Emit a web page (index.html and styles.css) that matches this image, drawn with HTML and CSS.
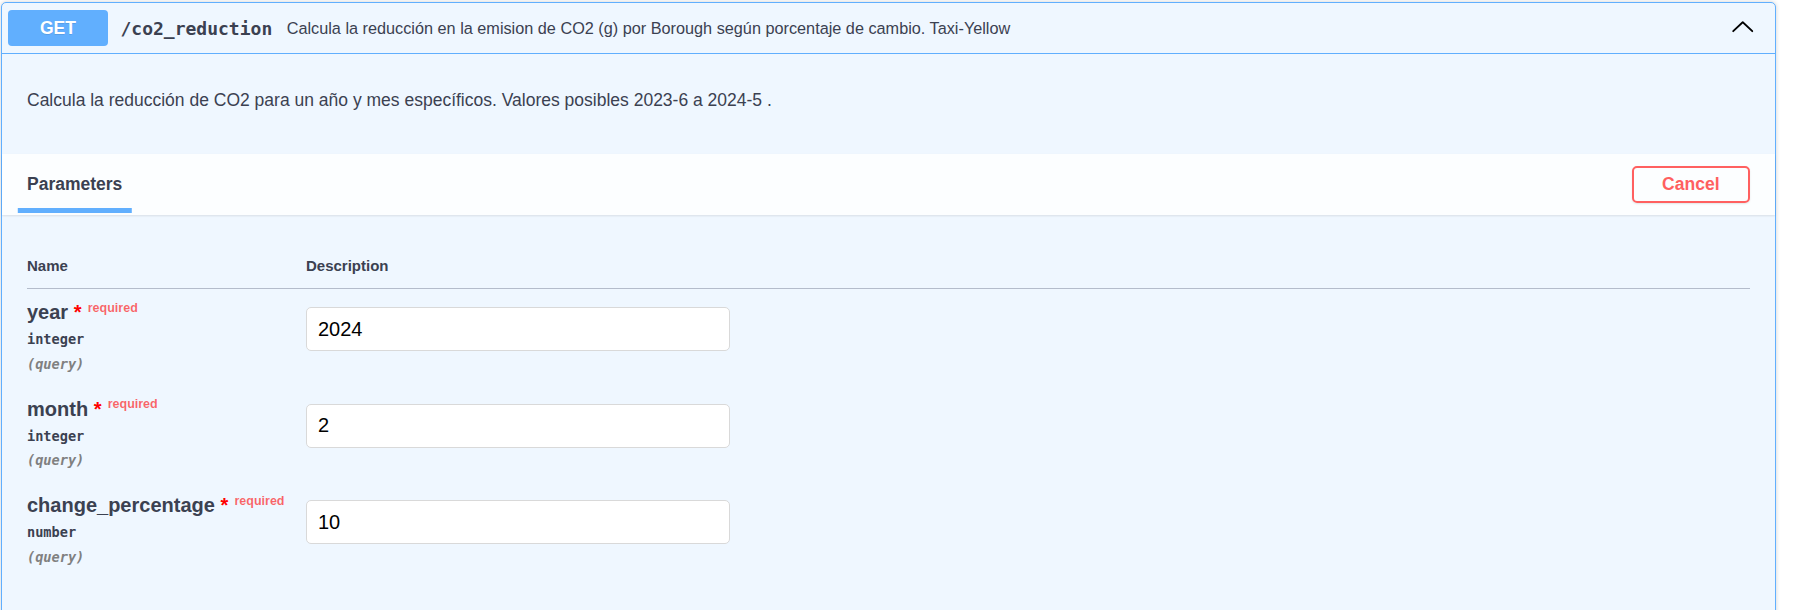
FILE: index.html
```html
<!DOCTYPE html>
<html lang="es">
<head>
<meta charset="utf-8">
<title>co2_reduction</title>
<link rel="stylesheet" href="styles.css">
</head>
<body>
<div class="page">
  <div class="opblock">
    <div class="summary">
      <span class="method">GET</span>
      <span class="path">/co2_reduction</span>
      <span class="summary-desc">Calcula la reducción en la emision de CO2 (g) por Borough según porcentaje de cambio. Taxi-Yellow</span>
      <svg class="arrow" viewBox="0 0 20 20" aria-hidden="true"><path d="M17.418 14.908c.27.268.27.701 0 .969a.684.684 0 0 1-.957 0L10 9.84l-6.461 6.037a.684.684 0 0 1-.956 0 .672.672 0 0 1 0-.969L9.52 8.423a.683.683 0 0 1 .957 0l6.94 6.485z"/></svg>
    </div>
    <div class="op-body">
      <div class="desc-wrapper">
        <p>Calcula la reducción de CO2 para un año y mes específicos. Valores posibles 2023-6 a 2024-5 .</p>
      </div>
      <div class="section-header">
        <h4 class="tab"><span class="tab-label">Parameters</span></h4>
        <button class="btn cancel" type="button">Cancel</button>
      </div>
      <div class="table-container">
        <table class="parameters">
          <thead>
            <tr><th class="col-name">Name</th><th class="col-desc">Description</th></tr>
          </thead>
          <tbody>
            <tr>
              <td class="col-name">
                <div class="param-name">year<span class="star">&nbsp;*</span></div>
                <div class="param-type">integer</div>
                <div class="param-in">(query)</div>
              </td>
              <td class="col-desc"><input class="param-input" type="text" value="2024"></td>
            </tr>
            <tr>
              <td class="col-name">
                <div class="param-name">month<span class="star">&nbsp;*</span></div>
                <div class="param-type">integer</div>
                <div class="param-in">(query)</div>
              </td>
              <td class="col-desc"><input class="param-input" type="text" value="2"></td>
            </tr>
            <tr>
              <td class="col-name">
                <div class="param-name">change_percentage<span class="star">&nbsp;*</span></div>
                <div class="param-type">number</div>
                <div class="param-in">(query)</div>
              </td>
              <td class="col-desc"><input class="param-input" type="text" value="10"></td>
            </tr>
          </tbody>
        </table>
      </div>
    </div>
  </div>
</div>
</body>
</html>
```

FILE: styles.css
```css
* { box-sizing: border-box; }

html, body {
  margin: 0;
  padding: 0;
  background: #ffffff;
}

body {
  font-family: "Liberation Sans", Arial, sans-serif;
  color: #3b4151;
}

.page {
  padding: 2px 25px 0 1px;
}

.opblock {
  border: 1px solid #61affe;
  border-radius: 5px;
  background: #eff7ff;
  box-shadow: 0 0 4px rgba(0, 0, 0, 0.19);
}

/* summary bar */
.summary {
  display: flex;
  align-items: center;
  padding: 7px 6px 6px 6px;
  border-bottom: 1px solid #61affe;
}

.method {
  min-width: 100px;
  padding: 7.5px 0;
  line-height: 21px;
  font-size: 17.5px;
  font-weight: 700;
  text-align: center;
  color: #ffffff;
  background: #61affe;
  border-radius: 4px;
  text-shadow: 0 1px 0 rgba(0, 0, 0, 0.1);
}

.path {
  padding: 0 14.5px 0 12.5px;
  font-family: "DejaVu Sans Mono", "Liberation Mono", monospace;
  font-size: 18px;
  font-weight: 700;
  color: #3b4151;
}

.summary-desc {
  flex: 1 1 auto;
  font-size: 16.25px;
  color: #3b4151;
}

.arrow {
  width: 27.5px;
  height: 27.5px;
  margin: 0 13px 9px 0;
  fill: #000000;
  flex: none;
}

/* description */
.desc-wrapper {
  padding: 33px 25px 41px;
}

.desc-wrapper p {
  margin: 0;
  font-size: 17.5px;
  line-height: 26px;
  color: #3b4151;
}

/* parameters header */
.section-header {
  display: flex;
  align-items: center;
  justify-content: space-between;
  height: 61px;
  padding: 0 25px;
  background: rgba(255, 255, 255, 0.8);
  box-shadow: 0 1px 2px rgba(0, 0, 0, 0.1);
}

.tab {
  margin: 0;
  font-size: 17.5px;
  line-height: 21px;
  font-weight: 700;
  color: #3b4151;
}

.tab-label {
  position: relative;
  display: inline-block;
}

.tab-label::after {
  content: "";
  position: absolute;
  left: 50%;
  bottom: -18px;
  width: 120%;
  height: 5px;
  transform: translateX(-50%);
  background: #61affe;
}

.btn {
  font-family: "Liberation Sans", Arial, sans-serif;
  font-size: 17.5px;
  font-weight: 700;
  line-height: 21px;
  border-radius: 5px;
  background: transparent;
  box-shadow: 0 1px 2px rgba(0, 0, 0, 0.1);
}

.cancel {
  height: 37px;
  padding: 0 28.5px;
  border: 2px solid #ff6060;
  color: #ff6060;
}

/* parameters table */
.table-container {
  padding: 25px 25px 90px;
}

.parameters {
  width: 100%;
  border-collapse: collapse;
}

.parameters th {
  padding: 17px 0 14px;
  font-size: 15px;
  line-height: 17px;
  font-weight: 700;
  text-align: left;
  color: #3b4151;
  border-bottom: 1px solid #b4bccb;
}

.parameters th.col-name,
.parameters td.col-name {
  width: 279px;
}

.parameters td {
  vertical-align: top;
}

.parameters td.col-name {
  padding: 12.5px 0;
}

.parameters td.col-desc {
  padding: 12.5px 0 0;
}

.param-name {
  font-size: 20px;
  line-height: 23px;
  font-weight: 700;
  color: #3b4151;
}

.param-name .star {
  color: #ff0000;
  line-height: 1;
}

.param-name::after {
  content: "required";
  position: relative;
  top: -7.5px;
  padding: 0 6.25px;
  font-size: 12.5px;
  line-height: 1;
  color: rgba(255, 0, 0, 0.6);
}

.param-type {
  padding: 6.25px 0;
  font-family: "DejaVu Sans Mono", "Liberation Mono", monospace;
  font-size: 13.6px;
  line-height: 18px;
  font-weight: 700;
  color: #3b4151;
}

.param-in {
  font-family: "DejaVu Sans Mono", "Liberation Mono", monospace;
  font-size: 13.6px;
  line-height: 18px;
  font-weight: 700;
  font-style: italic;
  color: #808080;
}

.param-input {
  display: block;
  width: 424px;
  height: 44px;
  margin: 6.25px 0;
  padding: 0 11px;
  border: 1px solid #d9d9d9;
  border-radius: 5px;
  background: #ffffff;
  font-family: "Liberation Sans", Arial, sans-serif;
  font-size: 20px;
  color: #000000;
}
```
